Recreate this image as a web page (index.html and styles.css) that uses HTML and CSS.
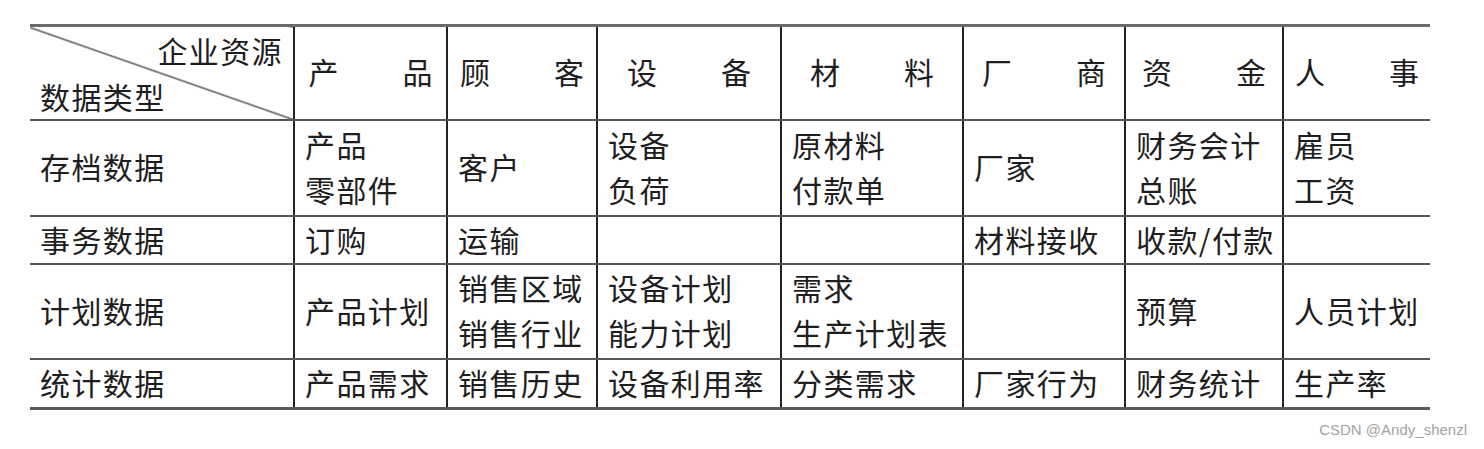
FILE: index.html
```html
<!DOCTYPE html>
<html lang="zh-CN">
<head>
<meta charset="utf-8">
<title>企业资源与数据类型</title>
<link rel="stylesheet" href="styles.css">
</head>
<body>
<table class="matrix">
  <colgroup>
    <col class="c0"><col class="c1"><col class="c2"><col class="c3"><col class="c4"><col class="c5"><col class="c6"><col class="c7">
  </colgroup>
  <thead>
    <tr class="r-head">
      <th class="corner">
        <div class="corner-in">
          <span class="corner-top">企业资源</span>
          <span class="corner-bottom">数据类型</span>
        </div>
      </th>
      <th><span class="spread"><span>产</span><span>品</span></span></th>
      <th><span class="spread"><span>顾</span><span>客</span></span></th>
      <th><span class="spread"><span>设</span><span>备</span></span></th>
      <th><span class="spread"><span>材</span><span>料</span></span></th>
      <th><span class="spread"><span>厂</span><span>商</span></span></th>
      <th><span class="spread"><span>资</span><span>金</span></span></th>
      <th><span class="spread"><span>人</span><span>事</span></span></th>
    </tr>
  </thead>
  <tbody>
    <tr class="r-1">
      <td class="rh">存档数据</td>
      <td>产品<br>零部件</td>
      <td>客户</td>
      <td>设备<br>负荷</td>
      <td>原材料<br>付款单</td>
      <td>厂家</td>
      <td>财务会计<br>总账</td>
      <td>雇员<br>工资</td>
    </tr>
    <tr class="r-2">
      <td class="rh">事务数据</td>
      <td>订购</td>
      <td>运输</td>
      <td></td>
      <td></td>
      <td>材料接收</td>
      <td>收款/付款</td>
      <td></td>
    </tr>
    <tr class="r-3">
      <td class="rh">计划数据</td>
      <td>产品计划</td>
      <td>销售区域<br>销售行业</td>
      <td>设备计划<br>能力计划</td>
      <td>需求<br>生产计划表</td>
      <td></td>
      <td>预算</td>
      <td>人员计划</td>
    </tr>
    <tr class="r-4">
      <td class="rh">统计数据</td>
      <td>产品需求</td>
      <td>销售历史</td>
      <td>设备利用率</td>
      <td>分类需求</td>
      <td>厂家行为</td>
      <td>财务统计</td>
      <td>生产率</td>
    </tr>
  </tbody>
</table>
<div class="watermark">CSDN @Andy_shenzl</div>
</body>
</html>
```

FILE: styles.css
```css
html, body {
  margin: 0;
  padding: 0;
  background: #ffffff;
}

body {
  position: relative;
  width: 1484px;
  height: 449px;
  overflow: hidden;
  font-family: "Noto Sans CJK SC", "Noto Sans", sans-serif;
  color: #1e1e1e;
}

.matrix {
  margin: 24px 0 0 30px;
  width: 1400px;
  table-layout: fixed;
  border-collapse: collapse;
  border-top: 3px solid #6a6a6a;
  border-bottom: 3px solid #5a5a5a;
  font-size: 30px;
  letter-spacing: 1.4px;
  line-height: 45px;
}

.c0 { width: 264px; }
.c1 { width: 153px; }
.c2 { width: 150px; }
.c3 { width: 184px; }
.c4 { width: 182px; }
.c5 { width: 162px; }
.c6 { width: 158px; }
.c7 { width: 147px; }

.matrix th,
.matrix td {
  padding: 0 0 3px 10px;
  border-top: 2px solid #555;
  border-bottom: 2px solid #555;
  border-left: 2px solid #222;
  border-right: 2px solid #222;
  vertical-align: middle;
  text-align: left;
  font-weight: 400;
  white-space: nowrap;
}

.matrix th:first-child,
.matrix td:first-child {
  border-left: none;
}

.matrix th:last-child,
.matrix td:last-child {
  border-right: none;
}

.matrix thead th {
  border-top: 3px solid #6a6a6a;
  padding: 0 0 4px 0;
}

.matrix tbody tr:last-child td {
  border-bottom: 3px solid #5a5a5a;
}

.r-head { height: 92px; }
.r-1 { height: 96px; }
.r-2 { height: 48px; }
.r-3 { height: 94px; }
.r-4 { height: 49px; }

.r-2 td,
.r-4 td {
  line-height: 38px;
}

.rh {
  padding-left: 10px;
}

.spread {
  display: flex;
  justify-content: space-between;
  width: 124px;
  margin: 0 auto;
  letter-spacing: 0;
}

.matrix thead th.corner {
  padding: 0;
  background: linear-gradient(to top right,
    transparent calc(50% - 1.2px),
    #2a2a2a 50%,
    transparent calc(50% + 1.2px));
}

.corner-in {
  display: flex;
  flex-direction: column;
  height: 92px;
  box-sizing: border-box;
  padding: 0 10px 0 10px;
  line-height: 46px;
}

.corner-top {
  align-self: flex-end;
}

.corner-bottom {
  align-self: flex-start;
}

.watermark {
  position: absolute;
  right: 17px;
  top: 421px;
  font-family: "Liberation Sans", Arial, sans-serif;
  font-size: 15px;
  line-height: 17px;
  color: #a3a3a3;
}
```
